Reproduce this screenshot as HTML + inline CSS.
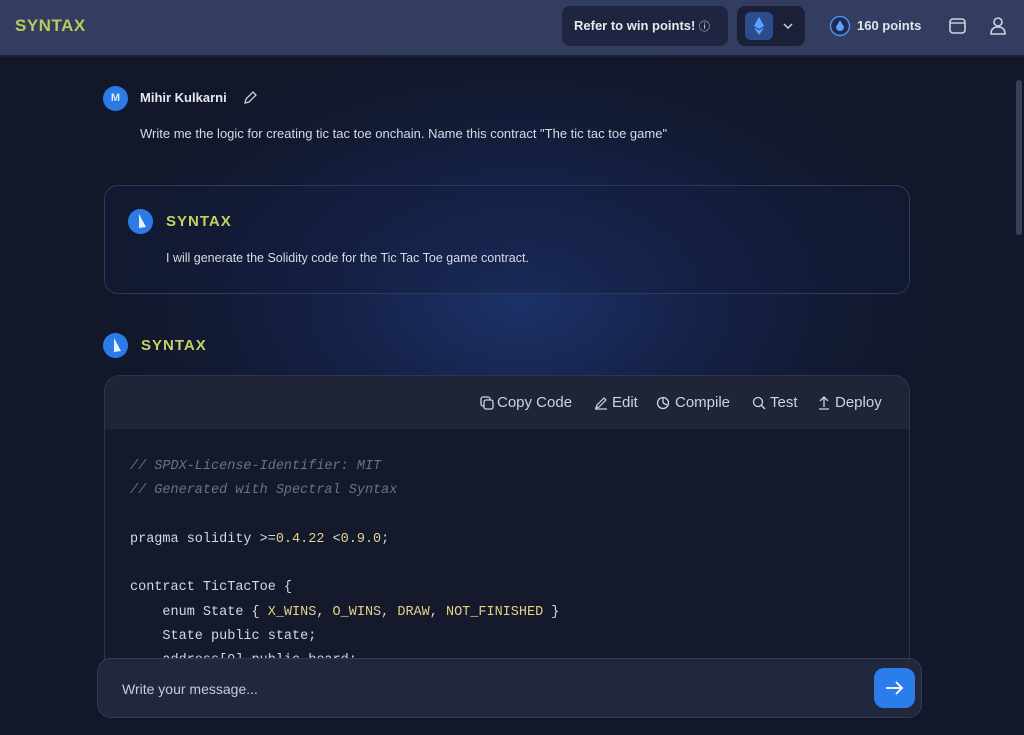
<!DOCTYPE html>
<html><head><meta charset="utf-8"><style>
*{margin:0;padding:0;box-sizing:border-box}
body{width:1024px;height:735px;overflow:hidden;font-family:"Liberation Sans",sans-serif;color:#e6e8ef;
background:radial-gradient(ellipse 420px 260px at 520px 300px,#1c3268 0%,#152147 45%,#121a33 75%,#12172a 100%);position:relative}
.hdr{position:absolute;left:0;top:0;width:1024px;height:57px;background:#333d5f;border-bottom:2px solid #1b2038}
.logo{position:absolute;left:15px;top:16px;font-weight:bold;font-size:17px;color:#b9c95a;letter-spacing:0.5px}
.refer{position:absolute;left:562px;top:6px;width:166px;height:40px;background:#1f2540;border-radius:8px;font-size:13px;font-weight:bold;color:#e8e8ef;line-height:40px;padding-left:12px}
.eth{position:absolute;left:737px;top:6px;width:68px;height:40px;background:#1b2038;border-radius:8px}
.eth .b{position:absolute;left:8px;top:6px;width:28px;height:28px;background:#2b4d8e;border-radius:6px}
.pts{position:absolute;left:830px;top:18px;font-size:13px;font-weight:bold;color:#e0e4ee}
.av{position:absolute;border-radius:50%;background:#2a7be5}
.name{position:absolute;left:140px;top:90px;font-size:13px;font-weight:bold}
.msg{position:absolute;left:140px;top:126px;font-size:13px;color:#d8dbe5}
.card{position:absolute;left:104px;top:185px;width:806px;height:109px;border:1.5px solid #2d3a5e;border-radius:14px;background:rgba(20,30,60,0.35)}
.syn{position:absolute;font-weight:bold;font-size:15px;color:#c6d25f;letter-spacing:1px}
.code{position:absolute;left:104px;top:375px;width:806px;height:300px;border:1.5px solid #2e3550;border-radius:16px;background:#141a2b;overflow:hidden}
.ch{height:53px;background:#1f2537;font-size:15px;color:#cfd3de;position:relative}
.ch span{position:absolute;top:18px}
pre{font-family:"Liberation Mono",monospace;font-size:13.5px;line-height:24.3px;color:#d6d8de;position:absolute;left:25px;top:79px}
.c{color:#6c7284;font-style:italic}.y{color:#e6d089}
.inp{position:absolute;left:97px;top:658px;width:825px;height:60px;background:#21273c;border:1.5px solid #333b55;border-radius:14px}
.inp .t{position:absolute;left:24px;top:22px;font-size:14px;color:#c9ccd6}
.send{position:absolute;left:776px;top:9px;width:41px;height:40px;background:#2b7de9;border-radius:10px}
.sb{position:absolute;left:1016px;top:80px;width:6px;height:155px;background:#3a4058;border-radius:3px}
</style></head><body>
<div class="hdr">
<div class="logo">SYNTAX</div>
<div class="refer">Refer to win points! <span style="font-weight:normal;font-size:11px">ⓘ</span></div>
<div class="eth"><div class="b"><svg width="28" height="28"><path d="M14 5 L19 14 L14 17 L9 14Z M14 18.5 L19 15.5 L14 23 L9 15.5Z" fill="#5aa2ff"/></svg></div>
<svg style="position:absolute;left:46px;top:16px" width="10" height="8"><path d="M1 2 L5 6 L9 2" stroke="#cfd3de" stroke-width="1.5" fill="none"/></svg></div>
<svg style="position:absolute;left:829px;top:15px" width="22" height="22"><circle cx="11" cy="11" r="9.5" fill="#1f2a4e" stroke="#4f8fe8" stroke-width="1.5"/><path d="M11 5 L15 12 A4 4 0 0 1 7 12Z" fill="#5aa2ff"/></svg>
<div class="pts" style="left:857px">160 points</div>
<svg style="position:absolute;left:948px;top:16px" width="20" height="20"><rect x="2" y="3" width="15" height="14" rx="3" stroke="#cfd3de" stroke-width="1.6" fill="none"/><path d="M2 7 H17" stroke="#cfd3de" stroke-width="1.4"/></svg>
<svg style="position:absolute;left:988px;top:15px" width="20" height="22"><circle cx="10" cy="7" r="4" stroke="#cfd3de" stroke-width="1.6" fill="none"/><path d="M3 19 Q3 12 10 12 Q17 12 17 19Z" stroke="#cfd3de" stroke-width="1.6" fill="none"/></svg>
</div>
<div class="sb"></div>
<div class="av" style="left:103px;top:86px;width:25px;height:25px;font-size:11px;font-weight:bold;text-align:center;line-height:25px">M</div>
<div class="name">Mihir Kulkarni</div>
<svg style="position:absolute;left:242px;top:90px" width="16" height="16"><path d="M3 13 L4 9 L11 2 L14 5 L7 12Z" stroke="#cfd3de" stroke-width="1.3" fill="none"/></svg>
<div class="msg">Write me the logic for creating tic tac toe onchain. Name this contract "The tic tac toe game"</div>
<div class="card"></div>
<svg class="av" style="left:128px;top:209px" width="25" height="25"><circle cx="12.5" cy="12.5" r="12.5" fill="#2a7be5"/><path d="M11 5 L18 18 L11 19Z" fill="#e8f0ff"/></svg>
<div class="syn" style="left:166px;top:213px">SYNTAX</div>
<div class="msg" style="left:166px;top:251px;font-size:12.5px">I will generate the Solidity code for the Tic Tac Toe game contract.</div>
<svg class="av" style="left:103px;top:333px" width="25" height="25"><circle cx="12.5" cy="12.5" r="12.5" fill="#2a7be5"/><path d="M11 5 L18 18 L11 19Z" fill="#e8f0ff"/></svg>
<div class="syn" style="left:141px;top:337px">SYNTAX</div>
<div class="code">
<div class="ch">
<svg style="position:absolute;left:375px;top:20px" width="14" height="14"><rect x="1" y="1" width="9" height="9" rx="2" stroke="#cfd3de" fill="none" stroke-width="1.3"/><rect x="4" y="4" width="9" height="9" rx="2" stroke="#cfd3de" fill="#1f2537" stroke-width="1.3"/></svg>
<span style="left:392px">Copy Code</span>
<svg style="position:absolute;left:489px;top:20px" width="14" height="14"><path d="M2 12 L3 9 L10 2 L12 4 L5 11Z M1 13 H13" stroke="#cfd3de" fill="none" stroke-width="1.2"/></svg>
<span style="left:507px">Edit</span>
<svg style="position:absolute;left:551px;top:20px" width="14" height="14"><circle cx="7" cy="7" r="5.5" stroke="#cfd3de" fill="none" stroke-width="1.3"/><path d="M7 7 V1.5 M7 7 L11 9" stroke="#cfd3de" stroke-width="1.3"/></svg>
<span style="left:570px">Compile</span>
<svg style="position:absolute;left:647px;top:20px" width="14" height="14"><circle cx="6" cy="6" r="4.5" stroke="#cfd3de" fill="none" stroke-width="1.3"/><path d="M9.5 9.5 L13 13" stroke="#cfd3de" stroke-width="1.4"/></svg>
<span style="left:665px">Test</span>
<svg style="position:absolute;left:713px;top:19px" width="12" height="15"><path d="M6 12 V2 M2 6 L6 2 L10 6 M1 14 H11" stroke="#cfd3de" fill="none" stroke-width="1.3"/></svg>
<span style="left:730px">Deploy</span></div>
<pre><span class="c">// SPDX-License-Identifier: MIT
// Generated with Spectral Syntax</span>

pragma solidity &gt;=<span class="y">0.4.22</span> &lt;<span class="y">0.9.0</span>;

contract TicTacToe {
    enum State { <span class="y">X_WINS</span>, <span class="y">O_WINS</span>, <span class="y">DRAW</span>, <span class="y">NOT_FINISHED</span> }
    State public state;
    address[9] public board;</pre>
</div>
<div class="inp"><div class="t">Write your message...</div>
<div class="send"><svg width="41" height="40"><path d="M12 20 H28 M22 14 L28 20 L22 26" stroke="#fff" stroke-width="1.8" fill="none"/></svg></div></div>
</body></html>
